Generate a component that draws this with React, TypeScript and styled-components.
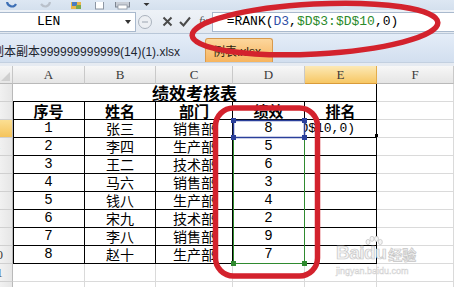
import React from 'react'
import styled, { createGlobalStyle } from 'styled-components'

const MONO = `"Liberation Mono", "Noto Sans CJK SC", monospace`
const CJK = `"Noto Sans CJK SC", "Liberation Sans", sans-serif`
const RED = '#d3222d'

const GlobalStyle = createGlobalStyle`
  html, body {
    margin: 0;
    padding: 0;
    background: #fff;
  }
  body {
    width: 454px;
    height: 287px;
    overflow: hidden;
  }
`

const Page = styled.div`
  position: relative;
  width: 454px;
  height: 287px;
  overflow: hidden;
  background: #fff;
  font-family: ${CJK};
  color: #000;
`

/* ---------- quick access toolbar (cut at the top) ---------- */

const QuickBar = styled.div`
  height: 10px;
  display: flex;
  align-items: flex-end;
  overflow: hidden;
  background: linear-gradient(#dde7f3, #d4e0ee);
`

const QuickIcon = styled.div<{ $left: number }>`
  margin-left: ${({ $left }) => $left}px;
  height: 10px;
  display: flex;
  align-items: flex-end;
  svg {
    display: block;
  }
`

/* ---------- formula bar ---------- */

const FormulaBar = styled.div`
  height: 23px;
  display: flex;
  align-items: center;
  background: linear-gradient(#eef2f7, #e3e9f1);
  border-bottom: 1px solid #b9c7d8;
`

const NameBox = styled.div`
  width: 136px;
  height: 20px;
  box-sizing: border-box;
  background: #fff;
  border: 1px solid #a9b9cd;
  border-left: none;
  display: flex;
  align-items: center;
  justify-content: space-between;
  padding: 0 4px 0 37px;
  font-family: ${MONO};
  font-size: 13px;
`

const DropArrow = styled.span`
  width: 0;
  height: 0;
  border-left: 3px solid transparent;
  border-right: 3px solid transparent;
  border-top: 4px solid #333;
`

const BarButton = styled.div<{ $left: number }>`
  margin-left: ${({ $left }) => $left}px;
  display: flex;
  align-items: center;
  svg {
    display: block;
  }
`

const Fx = styled.span`
  margin-left: 8px;
  font-family: "Liberation Serif", serif;
  font-style: italic;
  font-size: 12px;
  color: #555;
`

const FormulaInput = styled.div`
  flex: 1;
  margin-left: 4px;
  height: 20px;
  box-sizing: border-box;
  background: #fff;
  border: 1px solid #a9b9cd;
  border-right: none;
  display: flex;
  align-items: center;
  padding-left: 14px;
  font-family: ${MONO};
  font-size: 13px;
  white-space: nowrap;
`

const Ref = styled.span<{ $color: string }>`
  color: ${({ $color }) => $color};
`

/* ---------- workbook tabs ---------- */

const TabBar = styled.div`
  height: 28px;
  display: flex;
  align-items: flex-end;
  background: linear-gradient(#e4edf8, #d2dfef);
  border-bottom: 1px solid #c3d0e0;
`

const FileTitle = styled.div`
  width: 213px;
  margin-left: -8px;
  height: 24px;
  display: flex;
  align-items: center;
  font-family: "Liberation Sans", "Noto Sans CJK SC", sans-serif;
  font-size: 12px;
  color: #1e2530;
  white-space: nowrap;
`

const ActiveTab = styled.div`
  width: 68px;
  height: 24px;
  box-sizing: border-box;
  background: linear-gradient(#fcd79d, #f6b45f);
  border: 1px solid #d99a4d;
  border-bottom: none;
  border-radius: 3px 3px 0 0;
  display: flex;
  align-items: center;
  padding-left: 7px;
  font-family: "Liberation Sans", "Noto Sans CJK SC", sans-serif;
  font-size: 12px;
  color: #2a1c0c;
`

const Spacer = styled.div`
  height: 3px;
  background: #e6ebf2;
`

/* ---------- sheet ---------- */

const Sheet = styled.div`
  display: grid;
  grid-template-columns: 13px 72px 71px 77px 72px 72px 77px;
  grid-auto-rows: 18px;
`

const Corner = styled.div`
  position: relative;
  box-sizing: border-box;
  background: linear-gradient(#f6f6f6, #e6e6e6);
  border-right: 1px solid #c6c6c6;
  border-bottom: 1px solid #b9b9b9;
  &::after {
    content: '';
    position: absolute;
    right: 2px;
    bottom: 2px;
    width: 0;
    height: 0;
    border-left: 9px solid transparent;
    border-bottom: 9px solid #cfcfcf;
  }
`

const ColHead = styled.div<{ $active?: boolean }>`
  box-sizing: border-box;
  display: flex;
  align-items: center;
  justify-content: center;
  background: ${({ $active }) =>
    $active ? 'linear-gradient(#fce9b6, #f7c764)' : 'linear-gradient(#f7f7f7, #e5e5e5)'};
  border-right: 1px solid ${({ $active }) => ($active ? '#e3ad4c' : '#c9c9c9')};
  border-bottom: 1px solid ${({ $active }) => ($active ? '#d99b3a' : '#b9b9b9')};
  font-family: "Liberation Serif", serif;
  font-size: 13px;
  color: #3a3a3a;
`

const RowHead = styled.div<{ $active?: boolean }>`
  box-sizing: border-box;
  overflow: hidden;
  display: flex;
  align-items: center;
  background: ${({ $active }) =>
    $active ? 'linear-gradient(#fbdf93, #f5c45c)' : 'linear-gradient(90deg, #f1f1f1, #e6e6e6)'};
  border-right: 1px solid #b9b9b9;
  border-bottom: 1px solid #d0d0d0;
`

const RowNum = styled.span`
  flex: none;
  width: 33px;
  margin-left: -20px;
  text-align: center;
  font-family: "Liberation Serif", serif;
  font-size: 13px;
  color: #3a3a3a;
`

const Cell = styled.div<{ $edge?: boolean; $first?: boolean; $bold?: boolean; $mono?: boolean }>`
  box-sizing: border-box;
  display: flex;
  align-items: center;
  justify-content: center;
  white-space: nowrap;
  border-right: 1px solid ${({ $edge }) => ($edge ? '#000' : '#dadada')};
  border-bottom: 1px solid ${({ $edge }) => ($edge ? '#000' : '#dadada')};
  box-shadow: ${({ $first }) => ($first ? 'inset 1px 0 0 #000' : 'none')};
  font-family: ${({ $mono }) => ($mono ? MONO : CJK)};
  font-size: ${({ $bold }) => ($bold ? 15 : 14)}px;
  font-weight: ${({ $bold }) => ($bold ? 700 : 400)};
  line-height: 17px;
`

const TitleCell = styled(Cell)`
  grid-column: span 5;
  font-size: 17px;
  font-weight: 700;
`

const EditCell = styled(Cell)`
  overflow: hidden;
  justify-content: flex-end;
  padding-right: 21px;
  font-size: 13px;
`

/* ---------- overlays ---------- */

const Overlay = styled.svg`
  position: absolute;
  left: 0;
  top: 0;
  pointer-events: none;
`

const Watermark = styled.div`
  position: absolute;
  left: 336px;
  top: 236px;
  width: 92px;
  pointer-events: none;
  color: #f4f4f4;
  -webkit-text-stroke: 0.7px #c6c6c6;
`

const WmLine = styled.div`
  position: relative;
  display: flex;
  align-items: flex-end;
  height: 27px;
`

const WmLogo = styled.span`
  font-family: "Liberation Sans", sans-serif;
  font-weight: 700;
  font-size: 19px;
  line-height: 20px;
  letter-spacing: -0.5px;
`

const WmCn = styled.span`
  margin-left: 2px;
  font-family: ${CJK};
  font-weight: 700;
  font-size: 14px;
  line-height: 18px;
`

const WmPaw = styled.svg`
  position: absolute;
  left: 28px;
  top: 0;
`

const WmUrl = styled.div`
  margin-top: 3px;
  font-family: "Liberation Sans", sans-serif;
  font-size: 9px;
  -webkit-text-stroke: 0.4px #cfcfcf;
  color: #f2f2f2;
`

const columns = ['A', 'B', 'C', 'D', 'E', 'F']

const rows = [
  ['1', '张三', '销售部', '8'],
  ['2', '李四', '生产部', '5'],
  ['3', '王二', '技术部', '6'],
  ['4', '马六', '销售部', '3'],
  ['5', '钱八', '生产部', '4'],
  ['6', '宋九', '技术部', '2'],
  ['7', '李八', '销售部', '9'],
  ['8', '赵十', '生产部', '7'],
]

const headers = ['序号', '姓名', '部门', '绩效', '排名']

const App: React.FC = () => {
  return (
    <Page>
      <GlobalStyle />
      <QuickBar>
        <QuickIcon $left={5}>
          <svg width="13" height="8" viewBox="0 0 13 8">
            <path d="M2 0 C3 5 9 6 11 2" fill="none" stroke="#3d6fb5" strokeWidth="2.2" />
          </svg>
        </QuickIcon>
        <QuickIcon $left={22}>
          <svg width="12" height="8" viewBox="0 0 12 8">
            <path d="M10 0 C9 5 4 6 1 2" fill="none" stroke="#b9c0ca" strokeWidth="2.2" />
          </svg>
        </QuickIcon>
        <QuickIcon $left={18}>
          <svg width="12" height="8" viewBox="0 0 12 8">
            <rect x="1" y="0" width="10" height="7" fill="#e9b64a" />
            <rect x="2" y="0" width="5" height="4" fill="#4a7cc2" />
            <rect x="6" y="3" width="5" height="4" fill="#7aa84c" />
          </svg>
        </QuickIcon>
        <QuickIcon $left={13}>
          <svg width="9" height="8" viewBox="0 0 9 8">
            <rect x="0.5" y="-1" width="8" height="8" fill="#fff" stroke="#8d96a3" />
          </svg>
        </QuickIcon>
        <QuickIcon $left={11}>
          <svg width="15" height="8" viewBox="0 0 15 8">
            <rect x="0.5" y="-1" width="14" height="6" fill="#c9ced6" stroke="#7d8591" />
            <rect x="3" y="3" width="9" height="4" fill="#fff" stroke="#8d96a3" strokeWidth="0.8" />
          </svg>
        </QuickIcon>
        <QuickIcon $left={13}>
          <svg width="7" height="8" viewBox="0 0 7 8">
            <path d="M0.5 1 H6.5 L3.5 4 Z" fill="#333" />
          </svg>
        </QuickIcon>
      </QuickBar>

      <FormulaBar>
        <NameBox>
          LEN
          <DropArrow />
        </NameBox>
        <BarButton $left={2}>
          <svg width="14" height="16" viewBox="0 0 14 16">
            <circle cx="7" cy="8" r="6.5" fill="#eceff3" stroke="#aab2bd" />
            <rect x="4" y="7" width="6" height="2" fill="#c4cad2" />
          </svg>
        </BarButton>
        <BarButton $left={10}>
          <svg width="11" height="11" viewBox="0 0 11 11">
            <path d="M1.5 1.5 L9.5 9.5 M9.5 1.5 L1.5 9.5" stroke="#4a4a4a" strokeWidth="2" />
          </svg>
        </BarButton>
        <BarButton $left={6}>
          <svg width="12" height="11" viewBox="0 0 12 11">
            <path d="M1 6 L4.5 9.5 L11 1.5" fill="none" stroke="#4a4a4a" strokeWidth="2" />
          </svg>
        </BarButton>
        <Fx>fx</Fx>
        <FormulaInput>
          =RANK(<Ref $color="#2f4fa6">D3</Ref>,<Ref $color="#2b8a2b">$D$3:$D$10</Ref>,0)
        </FormulaInput>
      </FormulaBar>

      <TabBar>
        <FileTitle>副本副本999999999999(14)(1).xlsx</FileTitle>
        <ActiveTab>例表.xlsx</ActiveTab>
      </TabBar>
      <Spacer />

      <Sheet>
        <Corner />
        {columns.map((c) => (
          <ColHead key={c} $active={c === 'E'}>
            {c}
          </ColHead>
        ))}

        <RowHead>
          <RowNum>1</RowNum>
        </RowHead>
        <TitleCell $edge>绩效考核表</TitleCell>
        <Cell />

        <RowHead>
          <RowNum>2</RowNum>
        </RowHead>
        {headers.map((h, i) => (
          <Cell key={h} $edge $first={i === 0} $bold>
            {h}
          </Cell>
        ))}
        <Cell />

        {rows.map((r, i) => (
          <React.Fragment key={r[0]}>
            <RowHead $active={i === 0}>
              <RowNum>{i + 3}</RowNum>
            </RowHead>
            <Cell $edge $first $mono>
              {r[0]}
            </Cell>
            <Cell $edge>{r[1]}</Cell>
            <Cell $edge>{r[2]}</Cell>
            <Cell $edge $mono>
              {r[3]}
            </Cell>
            {i === 0 ? (
              <EditCell $edge $mono>
                =RANK(D3,$D$3:$D$10,0)
              </EditCell>
            ) : (
              <Cell $edge />
            )}
            <Cell />
          </React.Fragment>
        ))}

        {[11, 12].map((n) => (
          <React.Fragment key={n}>
            <RowHead>
              <RowNum>{n}</RowNum>
            </RowHead>
            {columns.map((c) => (
              <Cell key={c} />
            ))}
          </React.Fragment>
        ))}
      </Sheet>

      <Watermark>
        <WmLine>
          <WmLogo>Baidu</WmLogo>
          <WmCn>经验</WmCn>
          <WmPaw width="20" height="18" viewBox="0 0 20 18">
            <g fill="#f4f4f4" stroke="#c6c6c6" strokeWidth="0.8">
              <ellipse cx="4" cy="6" rx="2" ry="2.6" />
              <ellipse cx="8" cy="2.8" rx="2" ry="2.6" />
              <ellipse cx="12.5" cy="2.8" rx="2" ry="2.6" />
              <ellipse cx="16.3" cy="6" rx="2" ry="2.6" />
            </g>
          </WmPaw>
        </WmLine>
        <WmUrl>jingyan.baidu.com</WmUrl>
      </Watermark>

      <Overlay width="454" height="287" viewBox="0 0 454 287">
        {/* range finder: $D$3:$D$10 */}
        <rect x="233.5" y="120.5" width="71" height="143" fill="none" stroke="#2f8a2f" strokeWidth="1" />
        <rect x="231" y="261" width="5" height="5" fill="#2f8a2f" />
        <rect x="302" y="261" width="5" height="5" fill="#2f8a2f" />
        {/* range finder: D3 */}
        <rect x="233.5" y="120.5" width="71" height="17" fill="none" stroke="#2a3f9a" strokeWidth="1.5" />
        <rect x="231" y="118" width="5" height="5" fill="#2a3f9a" />
        <rect x="302" y="118" width="5" height="5" fill="#2a3f9a" />
        <rect x="231" y="135" width="5" height="5" fill="#2a3f9a" />
        <rect x="302" y="135" width="5" height="5" fill="#2a3f9a" />
        {/* active cell fill handle */}
        <rect x="375" y="134" width="3" height="3" fill="#000" />
        {/* hand-drawn marks */}
        <ellipse
          cx="315"
          cy="29"
          rx="123"
          ry="25"
          transform="rotate(-3 315 29)"
          fill="none"
          stroke={RED}
          strokeWidth="5.5"
        />
        <rect x="215.5" y="108" width="102" height="168" rx="18" fill="none" stroke={RED} strokeWidth="5.5" />
      </Overlay>
    </Page>
  )
}

export default App
